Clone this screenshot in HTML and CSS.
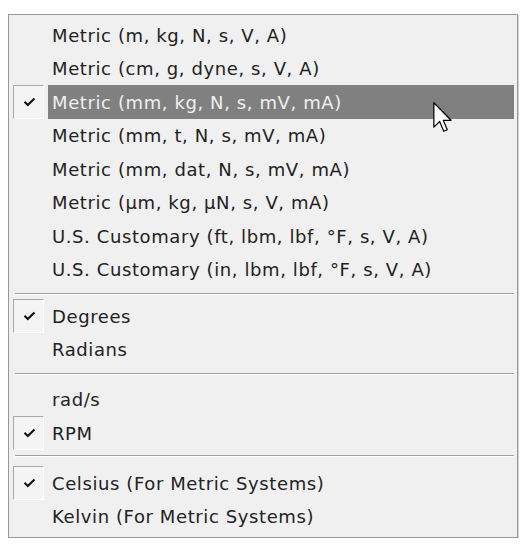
FILE: index.html
```html
<!DOCTYPE html>
<html>
<head>
<meta charset="utf-8">
<link rel="stylesheet" href="styles.css">
</head>
<body>
<div class="page">
  <div class="menu">
    <div class="group g1">
      <div class="item"><span class="check"></span><span class="label">Metric (m, kg, N, s, V, A)</span></div>
      <div class="item"><span class="check"></span><span class="label">Metric (cm, g, dyne, s, V, A)</span></div>
      <div class="item active"><span class="check on"><svg class="tick" viewBox="0 0 13 10" width="13" height="10"><path d="M1.5 4.8 L4.8 8 L11.5 1.5" fill="none" stroke="#111" stroke-width="2.1"/></svg></span><span class="label">Metric (mm, kg, N, s, mV, mA)</span></div>
      <div class="item"><span class="check"></span><span class="label">Metric (mm, t, N, s, mV, mA)</span></div>
      <div class="item"><span class="check"></span><span class="label">Metric (mm, dat, N, s, mV, mA)</span></div>
      <div class="item"><span class="check"></span><span class="label">Metric (µm, kg, µN, s, V, mA)</span></div>
      <div class="item"><span class="check"></span><span class="label">U.S. Customary (ft, lbm, lbf, °F, s, V, A)</span></div>
      <div class="item"><span class="check"></span><span class="label">U.S. Customary (in, lbm, lbf, °F, s, V, A)</span></div>
    </div>
    <div class="sep s1"></div>
    <div class="group">
      <div class="item"><span class="check on"><svg class="tick" viewBox="0 0 13 10" width="13" height="10"><path d="M1.5 4.8 L4.8 8 L11.5 1.5" fill="none" stroke="#111" stroke-width="2.1"/></svg></span><span class="label">Degrees</span></div>
      <div class="item"><span class="check"></span><span class="label">Radians</span></div>
    </div>
    <div class="sep s2"></div>
    <div class="group">
      <div class="item"><span class="check"></span><span class="label">rad/s</span></div>
      <div class="item"><span class="check on"><svg class="tick" viewBox="0 0 13 10" width="13" height="10"><path d="M1.5 4.8 L4.8 8 L11.5 1.5" fill="none" stroke="#111" stroke-width="2.1"/></svg></span><span class="label">RPM</span></div>
    </div>
    <div class="sep s3"></div>
    <div class="group">
      <div class="item"><span class="check on"><svg class="tick" viewBox="0 0 13 10" width="13" height="10"><path d="M1.5 4.8 L4.8 8 L11.5 1.5" fill="none" stroke="#111" stroke-width="2.1"/></svg></span><span class="label">Celsius (For Metric Systems)</span></div>
      <div class="item"><span class="check"></span><span class="label">Kelvin (For Metric Systems)</span></div>
    </div>
    <svg class="cursor" viewBox="0 0 13 21" width="20" height="32"><path d="M0.5 0.5 L0.5 16.5 L4.3 12.8 L7 19.2 L9.3 18.2 L6.7 12 L11.8 12 Z" fill="#fff" stroke="#000" stroke-width="0.8" stroke-linejoin="round"/></svg>
  </div>
</div>
</body>
</html>
```
FILE: styles.css
```css
html, body {
  margin: 0;
  padding: 0;
  background: #ffffff;
}
.page {
  padding: 14px 0 0 8px;
}
.menu {
  position: relative;
  box-sizing: border-box;
  width: 510px;
  height: 524px;
  background: #f0f0f0;
  border: 1px solid #979797;
  box-shadow: 1px 1px 0 #d4d4d4;
  padding: 3px 3px 3px 0;
  font-family: "DejaVu Sans", sans-serif;
  font-size: 18px;
  letter-spacing: 0.6px;
  color: #222222;
}
.group {
  display: flex;
  flex-direction: column;
}
.item {
  display: flex;
  height: 33.5px;
  align-items: stretch;
}
.check {
  box-sizing: border-box;
  width: 31.5px;
  margin-left: 3.5px;
  margin-right: 4px;
  display: flex;
  align-items: center;
  justify-content: center;
  padding-left: 3px;
}
.check.on {
  border-top: 1px solid #a8a8a8;
  border-left: 1px solid #a8a8a8;
  border-right: 1px solid #ffffff;
  border-bottom: 1px solid #ffffff;
  background: #f4f4f4;
}
.label {
  flex: 1;
  display: flex;
  align-items: center;
  padding-left: 4px;
  padding-top: 1px;
  white-space: nowrap;
}
.item.active .label {
  background: #808080;
  color: #efefef;
}
.sep {
  display: flex;
  align-items: flex-start;
  margin-left: 6px;
}
.sep::before {
  content: "";
  display: block;
  width: 100%;
  height: 1px;
  background: #a0a0a0;
  box-shadow: 0 1px 0 #ffffff;
}
.s1 { height: 13px; padding-top: 0; }
.s1::before { margin-top: 7px; }
.s2 { height: 16.5px; }
.s2::before { margin-top: 7px; }
.s3 { height: 16.5px; }
.s3::before { margin-top: 5.5px; }
.cursor {
  position: absolute;
  left: 424px;
  top: 87px;
}
```
